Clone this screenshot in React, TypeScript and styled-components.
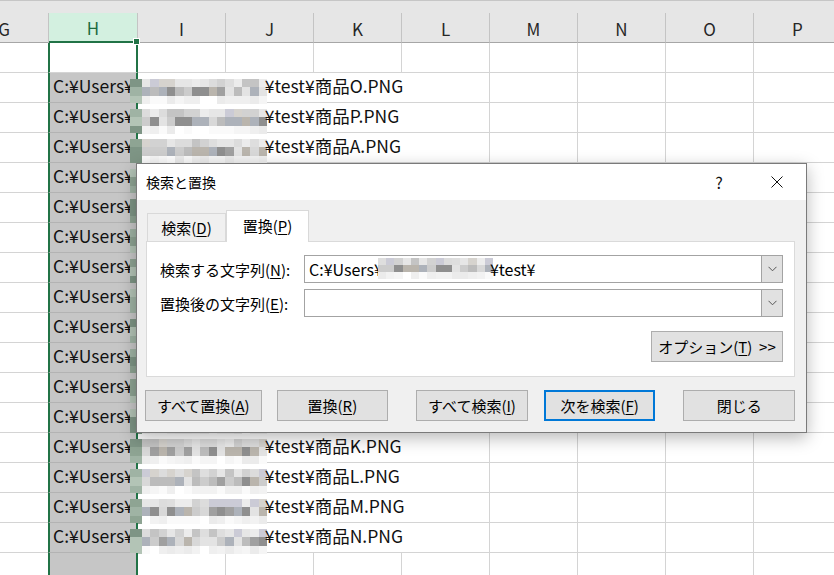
import React from 'react';
import styled, { createGlobalStyle } from 'styled-components';

const GlobalStyle = createGlobalStyle`
  html, body {
    margin: 0;
    padding: 0;
    background: #ffffff;
    overflow: hidden;
  }
  body {
    font-family: "Noto Sans CJK JP", "Noto Sans", sans-serif;
  }
`;

const Screen = styled.div`
  position: relative;
  width: 834px;
  height: 575px;
  overflow: hidden;
  background: #ffffff;
`;

// the sheet is scrolled so that column G is cut at the left edge
const Sheet = styled.div`
  margin-left: -40px;
  display: flex;
  flex-direction: column;
  font-size: 17.5px;
  color: #111;
`;

const HeaderRow = styled.div`
  display: flex;
  box-sizing: border-box;
  height: 43px;
  padding-top: 12px;
  border-top: 1px solid #c6c6c6;
  background: #e6e6e6;
  font-size: 17px;
`;

const HeaderCell = styled.div<{ $w: number; $active?: boolean }>`
  position: relative;
  flex: 0 0 ${p => p.$w}px;
  box-sizing: border-box;
  height: 30px;
  display: flex;
  align-items: center;
  justify-content: center;
  border-right: 1px solid #c4c4c4;
  border-bottom: ${p => (p.$active ? '2px solid #217346' : '1px solid #a6a6a6')};
  background: ${p => (p.$active ? '#d3f0e0' : 'transparent')};
  color: ${p => (p.$active ? '#1d6b40' : '#262626')};
  padding-top: 1px;
`;

const FillHandle = styled.div`
  position: absolute;
  right: -3px;
  bottom: -4px;
  width: 5px;
  height: 5px;
  background: #217346;
  border: 1px solid #ffffff;
  z-index: 3;
`;

const Row = styled.div`
  display: flex;
  height: 30px;
`;

const Cell = styled.div<{ $w: number; $noRight?: boolean }>`
  flex: 0 0 ${p => p.$w}px;
  box-sizing: border-box;
  height: 30px;
  border-right: ${p => (p.$noRight ? 'none' : '1px solid #d4d4d4')};
  border-bottom: 1px solid #d4d4d4;
  background: #ffffff;
`;

const SelCell = styled.div<{ $filled?: boolean }>`
  flex: 0 0 90px;
  width: 90px;
  min-width: 0;
  box-sizing: border-box;
  height: 30px;
  z-index: 1;
  display: flex;
  align-items: center;
  padding-left: 3px;
  white-space: nowrap;
  overflow: visible;
  border-left: 2px solid #217346;
  border-right: 2px solid #217346;
  border-bottom: 1px solid ${p => (p.$filled ? '#b3b3b3' : '#d4d4d4')};
  background: ${p => (p.$filled ? '#c6c6c6' : '#ffffff')};
`;

const CellText = styled.span`
  flex-shrink: 0;
  line-height: 30px;
  margin-top: -4px;
`;

const CellMosaic = styled.span`
  flex-shrink: 0;
  align-self: flex-start;
  margin-top: 6px;
  margin-left: -4px;
  margin-right: -2px;
  height: 25px;
  display: block;
`;

const Dialog = styled.div`
  position: absolute;
  left: 136px;
  top: 163px;
  width: 671px;
  height: 270px;
  box-sizing: border-box;
  border: 1px solid #7a7a7a;
  background: #f0f0f0;
  box-shadow: 0 5px 16px rgba(0, 0, 0, 0.28);
  display: flex;
  flex-direction: column;
  font-size: 15px;
  color: #000;
  z-index: 5;
`;

const TitleBar = styled.div`
  height: 36px;
  background: #ffffff;
  display: flex;
  align-items: center;
  padding-left: 9px;
`;

const Title = styled.div`
  flex: 1;
  font-size: 14px;
`;

const TitleButton = styled.div`
  width: 58px;
  height: 36px;
  display: flex;
  align-items: center;
  justify-content: center;
  font-size: 16px;
  color: #111;
`;

const Body = styled.div`
  flex: 1;
  display: flex;
  flex-direction: column;
  padding: 10px 11px 0 9px;
`;

const TabRow = styled.div`
  display: flex;
  align-items: flex-end;
  height: 31px;
  padding-left: 1px;
`;

const Tab = styled.div<{ $selected?: boolean }>`
  box-sizing: border-box;
  width: ${p => (p.$selected ? 83 : 79)}px;
  height: ${p => (p.$selected ? 32 : 28)}px;
  margin-bottom: ${p => (p.$selected ? -1 : 0)}px;
  border: 1px solid #d9d9d9;
  border-bottom: none;
  background: ${p => (p.$selected ? '#ffffff' : '#f0f0f0')};
  display: flex;
  align-items: center;
  justify-content: center;
  padding-bottom: ${p => (p.$selected ? 3 : 0)}px;
  z-index: ${p => (p.$selected ? 2 : 1)};
`;

const Key = styled.span`
  text-decoration: underline;
  text-underline-offset: 2px;
  text-decoration-thickness: 1px;
`;

const Panel = styled.div`
  box-sizing: border-box;
  background: #ffffff;
  border: 1px solid #dadada;
  padding: 13px 11px 14px 0;
  display: flex;
  flex-direction: column;
  gap: 6px;
`;

const FieldRow = styled.div`
  display: flex;
  align-items: center;
  height: 28px;
`;

const Label = styled.div`
  width: 157px;
  padding-left: 13px;
  box-sizing: border-box;
  white-space: nowrap;
`;

const Combo = styled.div`
  flex: 1;
  height: 28px;
  box-sizing: border-box;
  border: 1px solid #a3a3a3;
  display: flex;
  background: #ffffff;
`;

const ComboValue = styled.div`
  flex: 1;
  display: flex;
  align-items: center;
  padding-left: 4px;
  white-space: nowrap;
  overflow: hidden;
  font-size: 16px;
`;

const ComboMosaic = styled.span`
  flex-shrink: 0;
  align-self: flex-start;
  margin-top: 2px;
  margin-left: -5px;
  margin-right: -3px;
  height: 21px;
  display: block;
`;

const DropButton = styled.div`
  width: 20px;
  background: #e1e1e1;
  border-left: 1px solid #a3a3a3;
  display: flex;
  align-items: center;
  justify-content: center;
`;

const OptionRow = styled.div`
  display: flex;
  justify-content: flex-end;
  margin-top: 8px;
`;

const Button = styled.div<{ $w: number; $ml: number; $default?: boolean }>`
  box-sizing: border-box;
  width: ${p => p.$w}px;
  height: 31px;
  margin-left: ${p => p.$ml}px;
  background: #e1e1e1;
  border: ${p => (p.$default ? '2px solid #0078d7' : '1px solid #adadad')};
  display: flex;
  align-items: center;
  justify-content: center;
  white-space: nowrap;
`;

const ButtonRow = styled.div`
  display: flex;
  margin-top: 13px;
  margin-left: -1px;
`;

type MosaicProps = { w: number; h: number; seed: number; strip?: boolean };

const topShades = ['#dcdcdc', '#d2d2d2', '#e6e6e6', '#cbcbd6', '#dedede', '#c4c4c4', '#ececec', '#d6d3ce'];
const midShades = ['#a0a0a0', '#bcbcbc', '#8f8f8f', '#cccccc', '#adb2ba', '#d8d8d8', '#bab5ad', '#e3e3e3'];
const lowShades = ['#f5f5f5', '#efefef', '#fafafa', '#ebebeb', '#ffffff', '#f2f2f2'];
const stripShades = ['#9fb3a4', '#7e9585', '#b3c4b6', '#8ea493'];

// pixelated stand-in for the hidden user name
const Mosaic: React.FC<MosaicProps> = ({ w, h, seed, strip }) => {
  let s = seed * 7919 + 13;
  const next = () => {
    s = (s * 9301 + 49297) % 233280;
    return s / 233280;
  };
  const rows = [topShades, midShades, lowShades];
  const rowH = h / 3;
  const startX = strip ? 12 : 0;
  const cols = Math.round((w - startX) / 8.5);
  const colW = (w - startX) / cols;
  const rects: React.ReactNode[] = [];
  if (strip) {
    for (let r = 0; r < 3; r++) {
      rects.push(
        <rect key={`s${r}`} x={0} y={r * rowH} width={12} height={rowH + 0.5}
          fill={stripShades[Math.floor(next() * stripShades.length)]} />
      );
    }
  }
  rows.forEach((pal, r) => {
    for (let c = 0; c < cols; c++) {
      rects.push(
        <rect key={`${r}-${c}`} x={startX + c * colW} y={r * rowH} width={colW + 0.5} height={rowH + 0.5}
          fill={pal[Math.floor(next() * pal.length)]} />
      );
    }
  });
  return (
    <svg width={w} height={h} viewBox={`0 0 ${w} ${h}`} shapeRendering="crispEdges">
      {rects}
    </svg>
  );
};

const Chevron = () => (
  <svg width="9" height="6" viewBox="0 0 9 6">
    <path d="M0.5 0.8 L4.5 4.8 L8.5 0.8" fill="none" stroke="#555" strokeWidth="1" />
  </svg>
);

const CloseIcon = () => (
  <svg width="12" height="12" viewBox="0 0 12 12">
    <path d="M0.5 0.5 L11.5 11.5 M11.5 0.5 L0.5 11.5" fill="none" stroke="#111" strokeWidth="1" />
  </svg>
);

const columns = ['G', 'H', 'I', 'J', 'K', 'L', 'M', 'N', 'O', 'P'];
const files = ['O', 'P', 'A', 'B', 'C', 'D', 'E', 'F', 'G', 'H', 'I', 'J', 'K', 'L', 'M', 'N'];

const PlainCells = () => (
  <>
    {[0, 1, 2, 3, 4, 5, 6, 7].map(i => (
      <Cell key={i} $w={88} />
    ))}
  </>
);

const App: React.FC = () => {
  return (
    <Screen>
      <GlobalStyle />
      <Sheet>
        <HeaderRow>
          {columns.map(c => (
            <HeaderCell key={c} $w={c === 'G' || c === 'H' ? 89 : 88} $active={c === 'H'}>
              {c}
              {c === 'H' && <FillHandle />}
            </HeaderCell>
          ))}
        </HeaderRow>

        <Row>
          <Cell $w={88} $noRight />
          <SelCell />
          <PlainCells />
        </Row>

        {files.map((f, i) => (
          <Row key={f}>
            <Cell $w={88} $noRight />
            <SelCell $filled>
              <CellText>C:¥Users¥</CellText>
              <CellMosaic>
                <Mosaic w={137} h={25} seed={i + 1} strip />
              </CellMosaic>
              <CellText>¥test¥商品{f}.PNG</CellText>
            </SelCell>
            <Cell $w={352} />
            <Cell $w={88} />
            <Cell $w={88} />
            <Cell $w={88} />
            <Cell $w={88} />
          </Row>
        ))}

        <Row>
          <Cell $w={88} $noRight />
          <SelCell $filled />
          <PlainCells />
        </Row>
      </Sheet>

      <Dialog>
        <TitleBar>
          <Title>検索と置換</Title>
          <TitleButton>?</TitleButton>
          <TitleButton>
            <CloseIcon />
          </TitleButton>
        </TitleBar>
        <Body>
          <TabRow>
            <Tab>
              検索(<Key>D</Key>)
            </Tab>
            <Tab $selected>
              置換(<Key>P</Key>)
            </Tab>
          </TabRow>
          <Panel>
            <FieldRow>
              <Label>
                検索する文字列(<Key>N</Key>):
              </Label>
              <Combo>
                <ComboValue>
                  <span>C:¥Users¥</span>
                  <ComboMosaic>
                    <Mosaic w={115} h={21} seed={42} />
                  </ComboMosaic>
                  <span>¥test¥</span>
                </ComboValue>
                <DropButton>
                  <Chevron />
                </DropButton>
              </Combo>
            </FieldRow>
            <FieldRow>
              <Label>
                置換後の文字列(<Key>E</Key>):
              </Label>
              <Combo>
                <ComboValue />
                <DropButton>
                  <Chevron />
                </DropButton>
              </Combo>
            </FieldRow>
            <OptionRow>
              <Button $w={132} $ml={0}>
                オプション(<Key>T</Key>)&nbsp;&nbsp;&gt;&gt;
              </Button>
            </OptionRow>
          </Panel>
          <ButtonRow>
            <Button $w={117} $ml={0}>
              すべて置換(<Key>A</Key>)
            </Button>
            <Button $w={112} $ml={15}>
              置換(<Key>R</Key>)
            </Button>
            <Button $w={112} $ml={28}>
              すべて検索(<Key>I</Key>)
            </Button>
            <Button $w={112} $ml={16} $default>
              次を検索(<Key>F</Key>)
            </Button>
            <Button $w={112} $ml={28}>
              閉じる
            </Button>
          </ButtonRow>
        </Body>
      </Dialog>
    </Screen>
  );
};

export default App;
